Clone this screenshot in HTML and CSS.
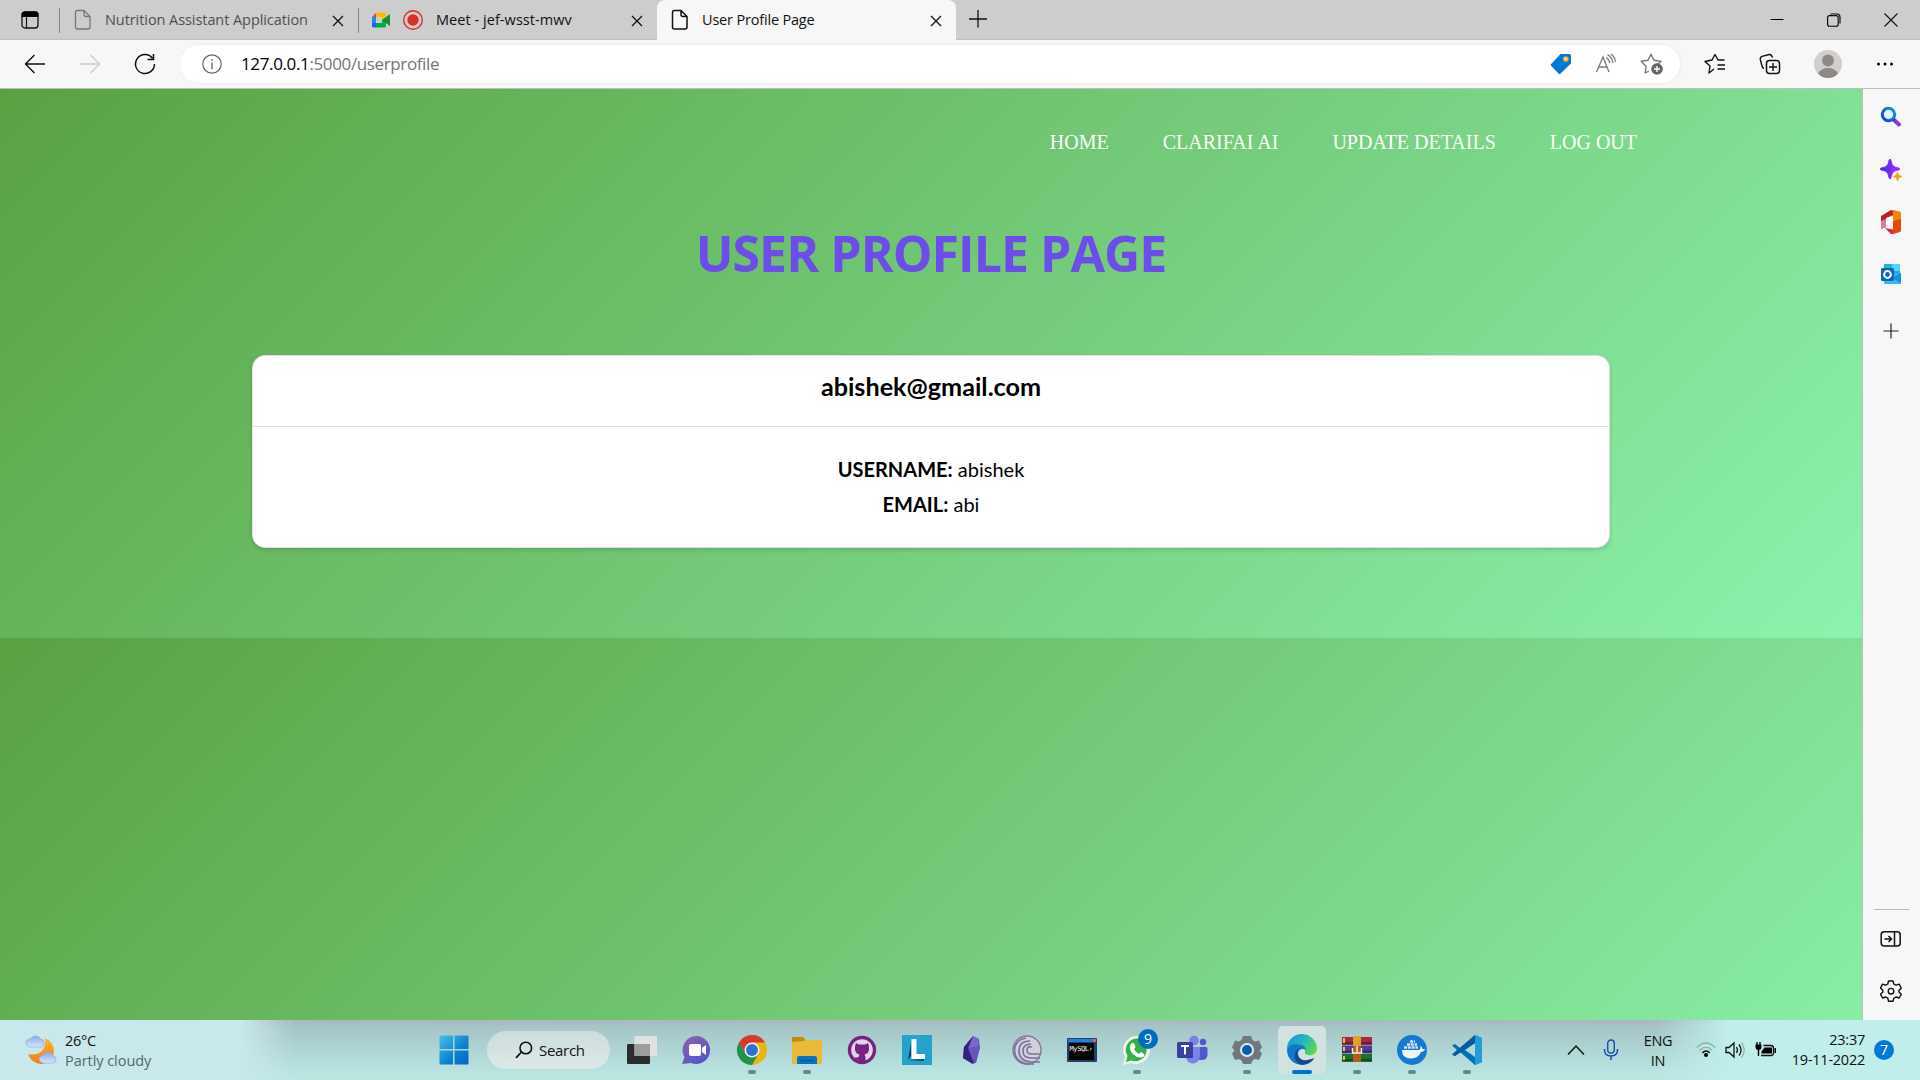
FILE: index.html
```html
<!DOCTYPE html>
<html lang="en">
<head>
<meta charset="utf-8">
<title>User Profile Page</title>
<link rel="stylesheet" href="styles.css">
</head>
<body>
<div class="screen">
  <header class="tabbar">
    <div class="tab-actions">
      <svg width="20" height="20" viewBox="0 0 20 20"><rect x="2" y="2" width="16" height="16" rx="3" fill="none" stroke="#111" stroke-width="1.3"/><path d="M1.5 7V4.500Q1.500 1.500 4.500 1.500H15.500Q18.500 1.500 18.500 4.500V7Z" fill="#000"/><path d="M6.500 7v11" stroke="#111" stroke-width="1.200"/></svg>
    </div>
    <div class="tab tab-first">
      <svg class="doc" width="18" height="22" viewBox="0 0 18 22"><path d="M3.500 1.500H10L16 7.500V18Q16 20 14 20H3.500Q1.500 20 1.500 18V3.500Q1.500 1.500 3.500 1.500ZM10 1.500V5.500Q10 7.500 12 7.500H16" fill="none" stroke="#777" stroke-width="1.300"/></svg>
      <span class="tab-title muted t-nutrition">Nutrition Assistant Application</span>
      <svg class="x" width="12" height="12" viewBox="0 0 12 12"><path d="M1 1L11 11M11 1L1 11" stroke="#111" stroke-width="1.300"/></svg>
    </div>
    <div class="tab tab-second">
      <svg class="meet" width="20" height="16" viewBox="0 0 20 16"><path d="M1 5L5 1V5Z" fill="#ea4335"/><path d="M5 .5H13.500Q15 .5 15 2V7L11 8V5H5Z" fill="#fbbc04"/><path d="M1 5H5V11H1Z" fill="#2684fc"/><path d="M1 11H5V15.500H2.500Q1 15.500 1 14Z" fill="#1869d8"/><path d="M5 11H11V8L15 9V14Q15 15.500 13.500 15.500H5Z" fill="#00ac47"/><path d="M11 8L19 2V14Z" fill="#188b3c"/></svg>
      <svg class="rec" width="20" height="20" viewBox="0 0 20 20"><circle cx="10" cy="10" r="9.300" fill="none" stroke="#d93025" stroke-width="1.400"/><circle cx="10" cy="10" r="5.700" fill="#d93025"/></svg>
      <span class="tab-title t-meet">Meet - jef-wsst-mwv</span>
      <svg class="x" width="12" height="12" viewBox="0 0 12 12"><path d="M1 1L11 11M11 1L1 11" stroke="#111" stroke-width="1.300"/></svg>
    </div>
    <div class="tab tab-active">
      <svg class="doc" width="18" height="22" viewBox="0 0 18 22"><path d="M3.500 1.500H10L16 7.500V18Q16 20 14 20H3.500Q1.500 20 1.500 18V3.500Q1.500 1.500 3.500 1.500ZM10 1.500V5.500Q10 7.500 12 7.500H16" fill="none" stroke="#111" stroke-width="1.500"/></svg>
      <span class="tab-title t-user">User Profile Page</span>
      <svg class="x" width="12" height="12" viewBox="0 0 12 12"><path d="M1 1L11 11M11 1L1 11" stroke="#111" stroke-width="1.300"/></svg>
    </div>
    <svg class="newtab" width="18" height="18" viewBox="0 0 18 18"><path d="M9 0V17.500M0 9H18" stroke="#111" stroke-width="1.300"/></svg>
    <div class="window-controls">
      <svg width="14" height="14" viewBox="0 0 14 14"><path d="M.5 6.500H13.500" stroke="#000"/></svg>
      <svg width="14" height="14" viewBox="0 0 14 14"><rect x=".6" y="2.600" width="10.600" height="10.600" rx="2" fill="none" stroke="#000" stroke-width="1.100"/><path d="M3.500 1H10Q13 1 13 4V10.500" fill="none" stroke="#000" stroke-width="1.100"/></svg>
      <svg width="14" height="14" viewBox="0 0 14 14"><path d="M.5.5L13.500 13.500M13.500.5L.5 13.500" stroke="#111" stroke-width="1.100"/></svg>
    </div>
  </header>

  <div class="toolbar">
    <svg class="back" width="22" height="20" viewBox="0 0 22 20"><path d="M21 10H1.500M10.500 1L1.500 10L10.500 19" fill="none" stroke="#111" stroke-width="1.400"/></svg>
    <svg class="forward" width="22" height="20" viewBox="0 0 22 20"><path d="M1 10H20.500M11.500 1L20.500 10L11.500 19" fill="none" stroke="#ccc" stroke-width="1.400"/></svg>
    <svg class="reload" width="22" height="22" viewBox="0 0 22 22"><path d="M20.500 11A9.500 9.500 0 1 1 18.500 5.200M19.500 1V6.500H13.500" fill="none" stroke="#111" stroke-width="1.500"/></svg>
    <div class="address">
      <svg width="20" height="20" viewBox="0 0 20 20"><circle cx="10" cy="10" r="9.200" fill="none" stroke="#666" stroke-width="1.200"/><path d="M10 8.500V15M10 5V6.800" stroke="#666" stroke-width="1.400"/></svg>
      <span class="url"><span class="host">127.0.0.1</span>:5000/userprofile</span>
      <div class="address-icons">
        <svg width="22" height="22" viewBox="0 0 22 22"><path d="M10.500 1H19Q21 1 21 3V10.500L10.500 20.500Q9.500 21.500 8.500 20.500L1.200 13Q.3 12 1.200 11Z" fill="#0078d7"/><circle cx="15.800" cy="6" r="2" fill="#fff" stroke="#f2b311" stroke-width="1.700"/></svg>
        <svg width="22" height="22" viewBox="0 0 22 22"><path d="M1.500 19L8 4L14 19M3.500 14H12M11 4.500Q14 6 15 10M12.500 1.500Q17 4 18 10M16 1Q20 4 20.500 9" fill="none" stroke="#777" stroke-width="1.300"/></svg>
        <svg width="24" height="22" viewBox="0 0 24 22"><path d="M9 18L5.200 20L6 13.200L1.200 8.300L8 7.200L11 1.200L14 7.200L21 8.300L18 11" fill="none" stroke="#777" stroke-width="1.400" stroke-linejoin="round"/><circle cx="17" cy="16" r="5.800" fill="#666"/><path d="M17 13V19M14 16H20" stroke="#fff" stroke-width="1.400"/></svg>
      </div>
    </div>
    <div class="toolbar-icons">
      <svg width="22" height="22" viewBox="0 0 22 22"><path d="M10 16L5 20L6 13L1 8.500L8 7L11 1.500L14 7L20.500 7M13.500 12H21M13.500 16H21" fill="none" stroke="#111" stroke-width="1.400" stroke-linejoin="round"/></svg>
      <svg width="22" height="22" viewBox="0 0 22 22"><rect x="7.500" y="7.500" width="13" height="13" rx="3" fill="none" stroke="#111" stroke-width="1.500"/><path d="M14 10V18M10 14H18M5 15.500Q3.500 15 3 13L1.300 6.500Q.8 4 3.200 3.300L10 1.500Q12.500 1 13.500 4.500" fill="none" stroke="#111" stroke-width="1.400"/></svg>
      <svg width="28" height="28" viewBox="0 0 28 28"><circle cx="14" cy="14" r="14" fill="#d2d0ce"/><circle cx="14" cy="10.500" r="6" fill="#8d8986"/><path d="M4 23.500Q7 18 14 18T24 23.500Q20 28 14 28T4 23.500Z" fill="#8d8986"/></svg>
      <svg class="more" width="18" height="6" viewBox="0 0 18 6"><circle cx="2.500" cy="3" r="1.500"/><circle cx="9" cy="3" r="1.500"/><circle cx="15.500" cy="3" r="1.500"/></svg>
    </div>
  </div>

  <div class="content">
    <main class="page">
      <nav class="nav"><a>HOME</a><a>CLARIFAI AI</a><a>UPDATE DETAILS</a><a>LOG OUT</a></nav>
      <h1 class="title"><span>USER PROFILE PAGE</span></h1>
      <section class="card">
        <h2 class="card-head"><span>abishek@gmail.com</span></h2>
        <div class="card-body">
          <p><b>USERNAME:</b> abishek</p>
          <p><b>EMAIL:</b> abi</p>
        </div>
      </section>
    </main>
    <aside class="sidebar">
      <svg width="22" height="22" viewBox="0 0 22 22"><defs><linearGradient id="mag" x1="0" y1="1" x2="1" y2="0"><stop offset="0" stop-color="#0a3fd0"/><stop offset="1" stop-color="#1a9ad0"/></linearGradient></defs><path d="M13.500 13.500L19 18.500" stroke="#8735ea" stroke-width="4" stroke-linecap="round"/><path d="M12 12L14.500 14.500" stroke="#30357c" stroke-width="3"/><circle cx="8.500" cy="8.500" r="6.200" fill="#e4f4ff" stroke="url(#mag)" stroke-width="3"/></svg>
      <svg width="22" height="22" viewBox="0 0 22 22"><defs><linearGradient id="spark" x1="0" y1="0" x2="1" y2="0"><stop offset="0" stop-color="#3d28e8"/><stop offset="1" stop-color="#b52ff8"/></linearGradient></defs><path d="M10 0Q11 0 12 5Q12.800 7.200 15 8Q20 9 20 10T15 12Q12.800 12.800 12 15Q11 20 10 20T8 15Q7.200 12.800 5 12Q0 11 0 10T5 8Q7.200 7.200 8 5Q9 0 10 0Z" fill="url(#spark)" stroke="url(#spark)" stroke-width=".8"/><path d="M17.500 13L18.800 16.200L22 17.500L18.800 18.800L17.500 22L16.200 18.800L13 17.500L16.200 16.200Z" fill="#efa50b" stroke="#efa50b" stroke-width=".6"/></svg>
      <svg width="22" height="24" viewBox="0 0 22 24"><path d="M1 6L11 0L14 1V5L6 8V17L1 19Z" fill="#bd2020"/><path d="M1 11L6 9V17L1 19Z" fill="#e775ad"/><path d="M13 0L20 2Q21 2.400 21 4V20Q21 21.600 20 22L13 24Z" fill="#e34a08"/><path d="M13 0L20 2Q21 2.400 21 4V9L13 11Z" fill="#f08705"/><path d="M5 18L13 19.500V24H11Z" fill="#e5203c"/></svg>
      <svg width="22" height="22" viewBox="0 0 22 22"><rect x="4" y="1" width="16" height="19" rx="1" fill="#28a8ea"/><path d="M12 1H20V8H12Z" fill="#50d9ff"/><path d="M4 14L21 10V20Q21 21 20 21H5Q4 21 4 20Z" fill="#35b8f1"/><path d="M21 10V20L12 15Z" fill="#1490df"/><rect x="1" y="5" width="13" height="13" rx="1.500" fill="#0f65b9"/><circle cx="7.500" cy="11.500" r="3.400" fill="none" stroke="#fff" stroke-width="2"/></svg>
      <svg width="16" height="16" viewBox="0 0 16 16"><path d="M8 .5V15.500M.5 8H15.500" stroke="#222" stroke-width="1.200"/></svg>
      <div class="sidebar-bottom">
        <svg width="22" height="18" viewBox="0 0 22 18"><rect x="1.200" y="1.700" width="19" height="14.300" rx="3" fill="none" stroke="#111" stroke-width="1.500"/><path d="M14.500 2V16M4.500 9H11M8.500 6L11.500 9L8.500 12" fill="none" stroke="#111" stroke-width="1.500"/></svg>
        <svg width="22" height="22" viewBox="0 0 22 22"><path d="M8.500 1H13L13.800 4L16 5.200L19.200 4.200L21.300 8L19 10.300V12L21.300 14.200L19.200 18L16 17L13.800 18.200L13 21.300H8.500L7.800 18.200L5.700 17L2.500 18L.5 14.200L2.800 12V10.300L.5 8L2.500 4.200L5.700 5.200L7.800 4Z" fill="none" stroke="#111" stroke-width="1.400" stroke-linejoin="round"/><circle cx="11" cy="11.200" r="2.800" fill="none" stroke="#111" stroke-width="1.400"/></svg>
      </div>
    </aside>
  </div>

  <footer class="taskbar">
    <div class="weather">
      <svg width="32" height="32" viewBox="0 0 32 32"><defs><linearGradient id="moon" x1="0" y1="0" x2="0" y2="1"><stop offset="0" stop-color="#f5bd35"/><stop offset="1" stop-color="#ee7c18"/></linearGradient><linearGradient id="cloud" x1="0" y1="0" x2="0" y2="1"><stop offset="0" stop-color="#86a8e8"/><stop offset="1" stop-color="#dbe6fb"/></linearGradient></defs><path d="M20 4Q29 8 29 17Q28 29 16 30Q6 29 3 20Q11 22 17 17Q21 12 20 4Z" fill="url(#moon)"/><path d="M5 13Q1 12 1 8.500T5.500 5Q7 1.500 11 2T15 5Q19 5 19 9Q19 13 15 13Z" fill="url(#cloud)" stroke="#92abe2" stroke-width=".7"/><path d="M18 29Q14 28 14 25T18 21.500Q20 17.500 24 18.500T28 22Q31 22 31 25.500T28 29Z" fill="url(#cloud)" stroke="#92abe2" stroke-width=".7"/></svg>
      <div class="weather-text"><span class="temp">26°C</span><span class="sky">Partly cloudy</span></div>
    </div>
    <div class="start">
      <svg width="30" height="30" viewBox="0 0 30 30"><defs><linearGradient id="win" x1="0" y1="0" x2="1" y2="1"><stop offset="0" stop-color="#45c1ea"/><stop offset=".6" stop-color="#0a80d0"/><stop offset="1" stop-color="#0268c5"/></linearGradient></defs><path d="M1 .5H14V14H.5V1ZM15.500.5H29L29.500 1V14H15.500ZM.5 15.500H14V29.500H1L.5 29ZM15.500 15.500H29.500V29L29 29.500H15.500Z" fill="url(#win)"/></svg>
    </div>
    <div class="search">
      <svg width="18" height="18" viewBox="0 0 18 18"><circle cx="10.800" cy="7" r="5.800" fill="none" stroke="#111" stroke-width="1.600"/><path d="M6.500 11L1 16.800" stroke="#111" stroke-width="1.800"/></svg>
      <span>Search</span>
    </div>
    <div class="apps">
      <div class="app"><svg width="32" height="32" viewBox="0 0 32 32"><rect x="1" y="10" width="23" height="20" rx="1" fill="#2c2c2c"/><rect x="8.500" y="2" width="22.500" height="20" rx="1" fill="#e3e3e3" opacity=".95"/><path d="M8.500 10H24V22H8.500Z" fill="#9d9d9d"/></svg></div>
      <div class="app"><svg width="32" height="32" viewBox="0 0 32 32"><defs><linearGradient id="chat" x1="0" y1="0" x2=".7" y2="1"><stop offset="0" stop-color="#8f62a8"/><stop offset="1" stop-color="#5058c8"/></linearGradient></defs><path d="M16 2A14 14 0 1 1 10 29L1 30L3.500 23A14 14 0 0 1 16 2Z" fill="url(#chat)"/><rect x="8" y="10" width="12" height="12" rx="2" fill="#fff"/><path d="M21 14L25 11V21L21 18Z" fill="#fff"/></svg></div>
      <div class="app running"><svg width="32" height="32" viewBox="0 0 32 32"><circle cx="16" cy="16" r="15" fill="#e9b312"/><path d="M3 8.500A15 15 0 0 1 29 8.500H16L9.500 20Z" fill="#d33a31"/><path d="M3 8.500L9.500 19.700L16 23.500L22.500 19.700L16 31A15 15 0 0 1 3 8.500Z" fill="#22914a"/><circle cx="16" cy="16" r="7.500" fill="#f4f4f4"/><circle cx="16" cy="16" r="6" fill="#2f6fd8"/></svg></div>
      <div class="app running"><svg width="32" height="32" viewBox="0 0 32 32"><path d="M1 3H12L14 5V10H1Z" fill="#c58a07"/><path d="M1 8L13 7L15 6H30Q31 6 31 7V29Q31 30 30 30H1Z" fill="#e9b93a"/><path d="M6 30V24Q6 22 8 22H24Q26 22 26 24V30Z" fill="#0873c3"/><path d="M10 26.500H22" stroke="#064e91"/></svg></div>
      <div class="app"><svg width="32" height="32" viewBox="0 0 32 32"><circle cx="16" cy="16" r="12.500" fill="#e0d5e6" stroke="#782384" stroke-width="3.400"/><path d="M10 9L13 10.500H19L22 9Q23.500 12 23 16Q22 20 18.500 20.500L19.500 23V29H12.500V26Q9 26 8.500 23Q11 24 12.500 23L13.500 20.500Q10 20 9 16Q8.500 12 10 9Z" fill="#782384"/></svg></div>
      <div class="app"><svg width="32" height="32" viewBox="0 0 32 32"><path d="M1 1H31V31H1Z" fill="#25a2ca"/><path d="M10 6V22L7 26L10 9ZM7 26L23 25V27Z" fill="#123c63"/><path d="M10.500 5H15.500V20H24V25H10.500Z" fill="#fff"/></svg></div>
      <div class="app"><svg width="32" height="32" viewBox="0 0 32 32"><path d="M17 2L23 5L24 14L20 29L16 29.500L7 24L8 13Z" fill="#6755bc"/><path d="M17 2L12 14L18 29.500L16 29.500L7 24L8 13Z" fill="#37217e"/><path d="M17 2L23 5L22 12L13 14Z" fill="#7a69cb"/></svg></div>
      <div class="app"><svg width="32" height="32" viewBox="0 0 32 32"><circle cx="16" cy="16" r="14" fill="#d3d0de" stroke="#8279a1" stroke-width="1.400"/><path d="M29 28H20Q8 27 8 17T19 7M29 24H20Q12 24 12 17T20 10M30 20H20Q16 20 16 16T21 13M23 30Q4 31 3.500 16Q4 6 15 4" fill="none" stroke="#7a7198" stroke-width="1.600"/></svg></div>
      <div class="app"><svg width="32" height="32" viewBox="0 0 32 32"><rect x="1" y="4" width="30" height="24" rx="1" fill="#263f68"/><path d="M2 5H30V8H2Z" fill="#1684df"/><path d="M27 5H30V8H27Z" fill="#ef603b"/><path d="M3 9H28V26H3Z" fill="#050505"/><text x="3.500" y="16.500" class="mysql">MySQL›</text></svg></div>
      <div class="app running"><svg width="32" height="32" viewBox="0 0 32 32"><path d="M16.500 2A14 14 0 1 1 10 29L2 31L4 23A14 14 0 0 1 16.500 2Z" fill="#f0f2f0"/><path d="M16.500 4.500A11.500 11.500 0 1 1 10 26.500L5 28L6.500 22A11.500 11.500 0 0 1 16.500 4.500Z" fill="#35b14a"/><path d="M10 10Q12 8 13.500 10L14.500 13L13 15Q15 19 18 20L20 18L23 20Q24 22 22 23Q17 25 12 20T10 10Z" fill="#fff"/></svg><span class="badge">9</span></div>
      <div class="app"><svg width="32" height="32" viewBox="0 0 32 32"><circle cx="18" cy="6.500" r="4.800" fill="#7b83eb"/><circle cx="27" cy="8" r="3.200" fill="#5059c9"/><path d="M22 13H30Q31.500 13 31.500 15V21Q31 26 26 26H22Z" fill="#5059c9"/><path d="M12 13H24V21Q24 29 17 29.500Q11 29 10 23Z" fill="#7b83eb"/><rect x="1" y="8" width="16" height="16" rx="1.500" fill="#3940a5"/><path d="M5 12H13M9 12V20.500" stroke="#fff" stroke-width="2"/></svg></div>
      <div class="app running"><svg width="32" height="32" viewBox="0 0 32 32"><path d="M12 2H20L21.500 6L24 7.500L28 6.500L31 13.500L28.500 16.500L31 19.500L28 26L24 25L21.500 26.500L20 30H12L10.500 26.500L8 25L4 26L1 19.500L3.500 16.500L1 13.500L4 6.500L8 7.500L10.500 6Z" fill="#70777d"/><circle cx="16" cy="16" r="6" fill="#085da8" stroke="#e3e9ed" stroke-width="2"/></svg></div>
      <div class="app running current"><svg width="32" height="32" viewBox="0 0 32 32"><defs><linearGradient id="edge" x1="0" y1=".2" x2="1" y2=".7"><stop offset="0" stop-color="#1796d9"/><stop offset=".5" stop-color="#27b7bd"/><stop offset="1" stop-color="#62d94c"/></linearGradient></defs><path d="M1 16A15 15 0 0 1 31 14Q31 21 24 21.500Q18 21 19 18Q20 14 15 11Q6 8 1 16Z" fill="url(#edge)"/><path d="M1 16Q3 10 10 10Q19 10 20 16Q14 13 12 19Q12 26 20 29L16 31A15 15 0 0 1 1 16Z" fill="#1478c8"/><path d="M14 14Q10 17 12 22Q15 27 21 26Q26 25 28.500 24Q24 31 16 31Q9 29 8.500 22Q9 16 14 14Z" fill="#104b8f"/></svg></div>
      <div class="app running"><svg width="32" height="32" viewBox="0 0 32 32"><path d="M1 3H31V11H1Z" fill="#ae2344"/><path d="M1 11.500H31V19.500H1Z" fill="#4f3c9c"/><path d="M1 20H31V28H1Z" fill="#16732c"/><path d="M1 9H31M1 17.500H31M1 26H31" stroke="#252525" stroke-width="2" opacity=".6"/><path d="M3 4V9M3 13V17M3 22V26" stroke="#f0bf36" stroke-width="2"/><path d="M12 2H20V12H12Z" fill="#d7a52d"/><path d="M12 12H20V28H12Z" fill="#b45c19"/><path d="M11.500 14V19H20.500V14M16 12V18" fill="none" stroke="#eee" stroke-width="1.400"/></svg></div>
      <div class="app running"><svg width="32" height="32" viewBox="0 0 32 32"><circle cx="16" cy="16" r="15" fill="#1679d1"/><path d="M6 16H22Q25 16 24.500 12Q26 12 26.500 15H29Q28 18 25 18Q22 25 14 24.500Q6 24 6 16Z" fill="#f0f4f7"/><path d="M8 13.500H22M11 10.500H21M14 7.500H19" stroke="#cfe0ee" stroke-width="2.400" stroke-dasharray="3 .8"/></svg></div>
      <div class="app running"><svg width="32" height="32" viewBox="0 0 32 32"><path d="M24 1L31 4V28L24 31L9 18L4 22L1 20.500L6 16L1 11.500L4 10L9 14Z" fill="#0072b8"/><path d="M24 1L31 4V28L24 31Z" fill="#239cdc"/><path d="M24 9V23L14 16Z" fill="#b1d9db"/><path d="M1 20.500L24 1V9L4 22Z" fill="#075e9e"/></svg></div>
    </div>
    <div class="tray">
      <svg class="chev" width="18" height="12" viewBox="0 0 18 12"><path d="M1 10.500L9 2L17 10.500" fill="none" stroke="#111" stroke-width="1.500"/></svg>
      <svg class="mic" width="16" height="22" viewBox="0 0 16 22"><rect x="4.700" y="1" width="6.600" height="13" rx="3.300" fill="none" stroke="#174ea6" stroke-width="1.400"/><path d="M1.500 10V11.500Q2 17 8 17T14.500 11.500V10M8 17V21" fill="none" stroke="#174ea6" stroke-width="1.500"/></svg>
      <div class="lang"><span>ENG</span><span>IN</span></div>
      <svg class="wifi" width="20" height="18" viewBox="0 0 20 18"><path d="M.8 6.500Q10-2.500 19.200 6.500M3.700 9.500Q10 3 16.300 9.500" fill="none" stroke="#8bacaa" stroke-width="1.200"/><path d="M6.300 12Q10 8 13.700 12" fill="none" stroke="#111" stroke-width="1.500"/><circle cx="10" cy="14" r="2"/></svg>
      <svg class="vol" width="20" height="18" viewBox="0 0 20 18"><path d="M1 6.500H4L9 2V16L4 11.500H1Z" fill="none" stroke="#111" stroke-width="1.300"/><path d="M11.500 6Q13.500 9 11.500 12M14 3.500Q18 9 14 14.500" fill="none" stroke="#111" stroke-width="1.300"/><path d="M16.500 1.500Q22 9 16.500 16.500" fill="none" stroke="#8bacaa" stroke-width="1.200"/></svg>
      <svg class="battery" width="22" height="18" viewBox="0 0 22 18"><path d="M2 1V4M5 1V4" stroke="#111" stroke-width="1.500"/><path d="M.5 3.500H6.500V6.500Q6.500 8.500 4.200 9V15H2.800V9Q.5 8.500 .5 6.500Z"/><path d="M8.500 4.500H16Q18.500 4.500 18.500 7V12Q18.500 14.500 16 14.500H6" fill="none" stroke="#111" stroke-width="1.300"/><path d="M9.500 6.500H17V12.500H6.500V10.500Z"/><path d="M19.500 7H21V12H19.500Z"/></svg>
      <div class="clock"><span>23:37</span><span class="date">19-11-2022</span></div>
      <span class="notice">7</span>
    </div>
  </footer>
</div>
</body>
</html>
```
FILE: styles.css
```css
* { box-sizing: border-box; }
body { margin: 0; overflow: hidden; font-family: "Open Sans", "Noto Sans", sans-serif; color: #111; }
svg { display: block; flex: none; }
p, h1, h2 { margin: 0; }
.screen { width: 1920px; height: 1080px; display: flex; flex-direction: column; }

.tabbar { height: 40px; flex: none; display: flex; align-items: stretch; background: #cdcdcd; box-shadow: inset 0 -1px #bfbfbf; }
.tab-actions { width: 59px; padding: 10px 0 0 20px; }
.tab { display: flex; align-items: center; white-space: nowrap; position: relative; }
.tab-first::before, .tab-second::before { content: ""; width: 1px; height: 25px; background: #858585; flex: none; }
.tab-first { width: 299px; }
.tab-first .doc { margin-left: 14px; }
.tab-second { width: 299px; }
.tab-second .meet { margin-left: 12px; }
.tab-second .rec { margin-left: 12px; }
.tab-active { width: 299px; background: #f7f7f7; border-radius: 8px 8px 0 0; }
.tab-active .doc { margin-left: 14px; }
.tab .x { margin-left: auto; margin-right: 14px; margin-top: 1px; }
.tab-title { font-size: 14.5px; line-height: 20px; }
.muted { color: #505050; }
.t-nutrition { margin-left: 13px; letter-spacing: -.07px; }
.t-meet { margin-left: 13px; letter-spacing: .05px; }
.t-user { margin-left: 13px; letter-spacing: -.18px; }
.newtab { margin: 10px 0 0 13px; }
.window-controls { margin: 13px 22px 0 auto; display: flex; gap: 43px; }

.toolbar { height: 49px; flex: none; display: flex; align-items: center; background: #f7f7f7; border-bottom: 1px solid #bebebe; padding-left: 24px; }
.forward { margin-left: 33px; }
.reload { margin-left: 33px; }
.address { margin: 0 0 1px 24px; width: 1500px; height: 38px; border-radius: 19px; background: #fff; box-shadow: 0 0 3px #e6e6e6; display: flex; align-items: center; padding: 0 16px 0 22px; }
.url { margin-left: 19px; font-size: 17px; letter-spacing: -.37px; color: #757575; white-space: nowrap; }
.host { color: #000; }
.address-icons { margin-left: auto; display: flex; align-items: center; gap: 23px; }
.toolbar-icons { margin-left: 24px; display: flex; align-items: center; gap: 33px; }
.more { margin-left: 1px; }

.content { flex: 1; display: flex; min-height: 0; }
.page { flex: 1; display: flex; flex-direction: column; align-items: center; background: linear-gradient(135deg, #5aa142, #8cf3ae) 0 0 / 100% 549px; }
.nav { align-self: flex-end; display: flex; gap: 54px; margin: 41px 225px 0 0; height: 24px; font: 20px/24px "Liberation Serif", serif; color: #fff; }
.title { margin-top: 65px; font-size: 50px; line-height: 68px; font-weight: 700; color: #6c4cea; letter-spacing: -.95px; height: 68px; white-space: nowrap; }
.card { margin-top: 68px; width: 1358px; height: 193px; background: #fff; border: 1px solid #dfdfdf; border-radius: 13px; box-shadow: 0 2px 4px rgba(0,0,0,.15); font-family: Lato, sans-serif; color: #000; text-align: center; }
.card-head { height: 71px; border-bottom: 1px solid #dfdfdf; font-size: 25.200px; line-height: 60px; font-weight: 700; }
.card-body { padding-top: 25px; font-size: 20px; line-height: 35px; }

.sidebar { width: 58px; background: #f7f7f7; border-left: 1px solid #bcbcbc; display: flex; flex-direction: column; align-items: center; padding: 17px 1px 0 0; }
.sidebar > svg:nth-child(2) { margin-top: 31px; }
.sidebar > svg:nth-child(3) { margin-top: 29px; }
.sidebar > svg:nth-child(4) { margin-top: 29px; }
.sidebar > svg:nth-child(5) { margin-top: 38px; }
.sidebar-bottom { margin-top: auto; margin-bottom: 18px; width: 35px; border-top: 1px solid #b9b9b9; padding-top: 20px; display: flex; flex-direction: column; align-items: center; gap: 32px; }

.taskbar { height: 60px; flex: none; display: flex; align-items: center; background: linear-gradient(90deg, #c9e8eb 0, #c9e8eb 240px, transparent 295px, transparent 1655px, #c0eeea 1730px), linear-gradient(#a9b7bd 0, #a5c4c6 10%, #b8e3e0 85%, #bbe7e3 100%); }
.weather { width: 438px; display: flex; align-items: center; padding-left: 25px; gap: 8px; }
.weather-text { display: flex; flex-direction: column; font-size: 14.5px; line-height: 20px; padding-top: 1px; }
.temp { letter-spacing: -.3px; }
.sky { color: #52686b; letter-spacing: -.05px; white-space: nowrap; }
.start { width: 49px; padding-left: 1px; }
.search { width: 123px; height: 38px; border-radius: 19px; background: linear-gradient(#ccdcdc, #dce9e8); display: flex; align-items: center; padding-left: 28px; gap: 6px; font-size: 15px; letter-spacing: -.3px; }
.apps { display: flex; margin-left: 4px; }
.app { width: 55px; height: 60px; display: flex; align-items: center; justify-content: center; position: relative; }
.app > svg { position: relative; }
.running::after { content: ""; position: absolute; left: 24px; bottom: 6px; width: 8px; height: 4px; border-radius: 2px; background: #698784; }
.current::before { content: ""; position: absolute; left: 4px; top: 6px; width: 48px; height: 48px; border-radius: 5px; background: #d2e2e1; }
.current::after { left: 18px; width: 20px; background: #0071d0; }
.badge { position: absolute; left: 29px; top: 9px; width: 20px; height: 20px; border-radius: 50%; background: #006cbe; color: #fff; text-align: center; font-size: 14px; line-height: 20px; }
.mysql { font: 7px "DejaVu Sans Mono", monospace; fill: #fff; letter-spacing: -.4px; }
.tray { flex: 1; display: flex; align-items: center; padding-left: 73px; font-size: 14.5px; line-height: 20px; }
.mic { margin-left: 18px; }
.lang { margin-left: 20px; padding-top: 1px; width: 38px; display: flex; flex-direction: column; align-items: center; letter-spacing: -.3px; }
.wifi { margin-left: 19px; }
.vol { margin-left: 9px; }
.battery { margin-left: 10px; }
.clock { margin-left: 15px; width: 73px; display: flex; flex-direction: column; align-items: flex-end; letter-spacing: -.25px; white-space: nowrap; }
.notice { margin-left: 9px; width: 20px; height: 20px; border-radius: 50%; background: #0078d7; color: #fff; text-align: center; font-size: 14px; }
```
